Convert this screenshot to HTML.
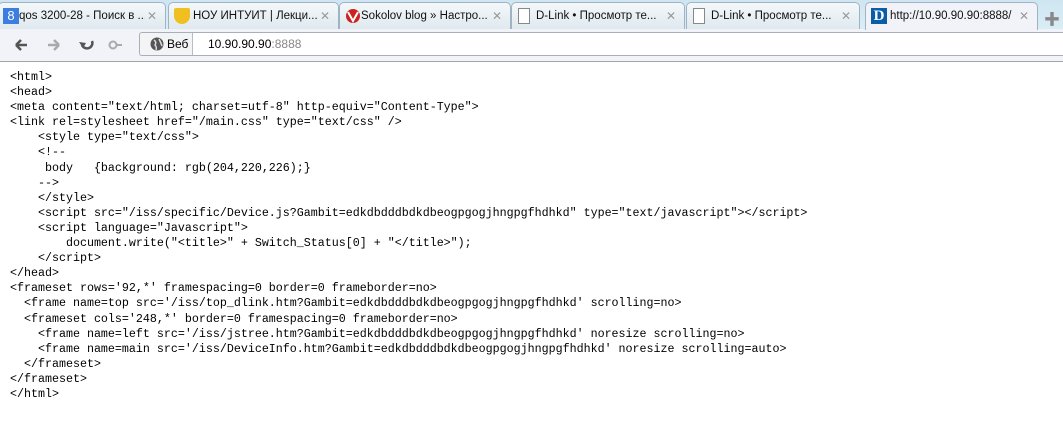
<!DOCTYPE html>
<html><head><meta charset="utf-8"><style>
*{margin:0;padding:0;box-sizing:border-box}
body{width:1063px;height:429px;overflow:hidden;background:#fff;font-family:"Liberation Sans","Noto Sans CJK SC",sans-serif;position:relative}
#strip{position:absolute;left:0;top:0;width:1063px;height:29px;background:linear-gradient(#cfe6f2,#d9edf6)}
.tab{position:absolute;top:2px;height:27px;border:1px solid #9fb3c4;border-bottom:none;border-radius:5px 5px 0 0;background:linear-gradient(#f4f8fa,#dfe9ef);font-size:11.5px;color:#111;white-space:nowrap;overflow:hidden}
.tab .ic{position:absolute;left:5px;top:5px;width:16px;height:16px}
.tab .t{position:absolute;left:24px;top:7px;right:20px;overflow:hidden}
.tab .x{position:absolute;right:8px;top:6px;color:#999;font-size:12px}
.tab.act{background:#f1f3f8;height:28px;z-index:2}
#tb{position:absolute;left:0;top:29px;width:1063px;height:33px;background:#f1f3f8;border-bottom:1px solid #a0a4ab}
#addr{position:absolute;left:139px;top:3px;width:924px;height:24px;border:1px solid #a9afb8;border-right:none;border-radius:3px 0 0 3px;background:#fff}
#web{position:absolute;left:0;top:0;width:53px;height:22px;border-right:1px solid #b8bcc4;background:#f3f4f6;font-size:12px;padding:4px 0 0 27px;border-radius:3px 0 0 3px}
#url{position:absolute;left:68px;top:4px;font-size:12px;color:#000}
pre{position:absolute;left:10px;top:70px;font-family:"Liberation Mono",monospace;font-size:11.67px;line-height:15.1px;color:#000}
</style></head><body>
<div id="strip">
<div class="tab" style="left:-2px;width:168px"><div class="ic" style="background:#3b7de0;color:#fff;font-size:13px;text-align:center;left:4px">8</div><span class="t" style="left:20px">qos 3200-28 - Поиск в ...</span><span class="x">✕</span></div>
<div class="tab" style="left:168px;width:171px"><div class="ic" style="background:#f0c020;border-radius:2px 2px 8px 8px"></div><span class="t">НОУ ИНТУИТ | Лекци...</span><span class="x">✕</span></div>
<div class="tab" style="left:339px;width:172px"><div class="ic"><svg width="16" height="16"><circle cx="8" cy="8" r="7" fill="#c22"/><path d="M3 4L8 13L13 4" stroke="#fff" stroke-width="2" fill="none"/></svg></div><span class="t" style="left:21px">Sokolov blog » Настро...</span><span class="x">✕</span></div>
<div class="tab" style="left:511px;width:174px"><div class="ic" style="border:1px solid #888;background:#fff;width:12px;left:6px"></div><span class="t">D-Link • Просмотр те...</span><span class="x">✕</span></div>
<div class="tab" style="left:686px;width:174px"><div class="ic" style="border:1px solid #888;background:#fff;width:12px;left:6px"></div><span class="t">D-Link • Просмотр те...</span><span class="x">✕</span></div>
<div class="tab act" style="left:865px;width:173px"><div class="ic" style="background:#0a5ea8;color:#fff;font:bold 15px 'Liberation Serif',serif;text-align:center;line-height:16px">D</div><span class="t">http://10.90.90.90:8888/</span><span class="x">✕</span></div>
<div style="position:absolute;left:1044px;top:6px;color:#888;font-size:16px">✚</div>
</div>
<div id="tb">
<svg style="position:absolute;left:12px;top:8px" width="110" height="16">
<path d="M4 8H15M4 8L9 3M4 8L9 13" stroke="#555" stroke-width="2.5" fill="none"/>
<path d="M36 8H47M47 8L42 3M47 8L42 13" stroke="#aaa" stroke-width="2.5" fill="none"/>
<path d="M80 4A5 5 0 1 1 70 8" stroke="#555" stroke-width="2.5" fill="none"/><path d="M67 5L71 11L74 6Z" fill="#555"/>
<circle cx="101" cy="8" r="3.5" stroke="#aaa" stroke-width="2" fill="none"/><path d="M104 8H112" stroke="#aaa" stroke-width="2"/>
</svg>
<div id="addr"><div id="web"><svg style="position:absolute;left:10px;top:4px" width="14" height="14"><circle cx="7" cy="7" r="6.5" fill="#555"/><path d="M4 3Q7 5 5 8Q7 10 6 13M9 2Q11 6 12 9" stroke="#ddd" stroke-width="1.5" fill="none"/></svg>Веб</div><span id="url">10.90.90.90<span style="color:#888">:8888</span></span></div>
</div>
<pre>&lt;html&gt;
&lt;head&gt;
&lt;meta content="text/html; charset=utf-8" http-equiv="Content-Type"&gt;
&lt;link rel=stylesheet href="/main.css" type="text/css" /&gt;
    &lt;style type="text/css"&gt;
    &lt;!--
     body   {background: rgb(204,220,226);}
    --&gt;
    &lt;/style&gt;
    &lt;script src="/iss/specific/Device.js?Gambit=edkdbdddbdkdbeogpgogjhngpgfhdhkd" type="text/javascript"&gt;&lt;/script&gt;
    &lt;script language="Javascript"&gt;
        document.write("&lt;title&gt;" + Switch_Status[0] + "&lt;/title&gt;");
    &lt;/script&gt;
&lt;/head&gt;
&lt;frameset rows='92,*' framespacing=0 border=0 frameborder=no&gt;
  &lt;frame name=top src='/iss/top_dlink.htm?Gambit=edkdbdddbdkdbeogpgogjhngpgfhdhkd' scrolling=no&gt;
  &lt;frameset cols='248,*' border=0 framespacing=0 frameborder=no&gt;
    &lt;frame name=left src='/iss/jstree.htm?Gambit=edkdbdddbdkdbeogpgogjhngpgfhdhkd' noresize scrolling=no&gt;
    &lt;frame name=main src='/iss/DeviceInfo.htm?Gambit=edkdbdddbdkdbeogpgogjhngpgfhdhkd' noresize scrolling=auto&gt;
  &lt;/frameset&gt;
&lt;/frameset&gt;
&lt;/html&gt;</pre>
</body></html>
